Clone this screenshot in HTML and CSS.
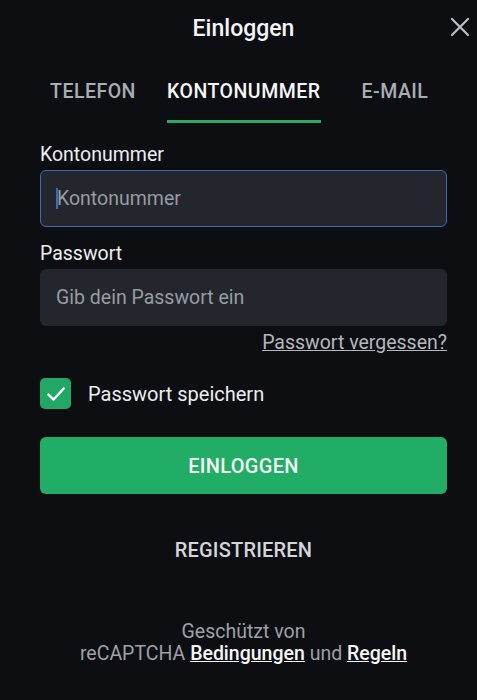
FILE: index.html
```html
<html>
  <head>
    <link rel="stylesheet" href="styles.css">
    <title>Einloggen</title>
  </head>
  <body>
    <div class="sheet">
      <header class="top">
        <h1>Einloggen</h1>
        <button class="close" aria-label="Schließen">
          <svg width="20" height="20" viewBox="0 0 20 20">
            <path d="M2 2 L18 18 M18 2 L2 18" stroke="#bcbfc5" stroke-width="2.2" stroke-linecap="round" fill="none" />
          </svg>
        </button>
      </header>

      <nav class="tabs">
        <span class="tab">TELEFON</span>
        <span class="tab active">KONTONUMMER</span>
        <span class="tab">E-MAIL</span>
      </nav>

      <form class="login">
        <label class="label">Kontonummer</label>
        <div class="field focus"><span class="caret"></span>Kontonummer</div>

        <label class="label">Passwort</label>
        <div class="field">Gib dein Passwort ein</div>

        <a class="forgot" href="#">Passwort vergessen?</a>

        <div class="remember">
          <span class="check">
            <svg width="22" height="22" viewBox="0 0 20 20">
              <path d="M3 10.5 L7.8 15 L17 5" stroke="#fff" stroke-width="2.2" stroke-linecap="round" stroke-linejoin="round" fill="none" />
            </svg>
          </span>
          Passwort speichern
        </div>

        <button class="submit" type="button">EINLOGGEN</button>
      </form>

      <a class="register" href="#">REGISTRIEREN</a>

      <p class="captcha">
        Geschützt von<br>
        reCAPTCHA <a href="#">Bedingungen</a> und <a href="#">Regeln</a>
      </p>
    </div>
  </body>
</html>
```

FILE: styles.css
```css
body {
  margin: 0;
  background: #0d0e11;
  font-family: Roboto, "Noto Sans", sans-serif;
  color: #f2f3f5;
}

.sheet {
  padding: 0 30px 0 40px;
  height: 700px;
  box-sizing: border-box;
}

.top {
  display: flex;
  justify-content: center;
  align-items: center;
  height: 56px;
  position: relative;
}

.top h1 {
  margin: 0;
  font-size: 23px;
  font-weight: 500;
  color: #f4f5f7;
}

.close {
  position: absolute;
  right: -23px;
  top: 17px;
  background: none;
  border: none;
  padding: 0;
}

.tabs {
  display: flex;
  margin: 24px 0 0 10px;
}

.tab {
  flex-shrink: 0;
  white-space: nowrap;
  font-size: 19.5px;
  font-weight: 500;
  letter-spacing: 0.5px;
  color: #a9adb4;
  padding-bottom: 17px;
  margin-right: 31px;
  border-bottom: 3px solid transparent;
}

.tab.active {
  color: #f6f7f9;
  border-bottom-color: #2ea664;
  margin-right: 41px;
}

.login {
  display: flex;
  flex-direction: column;
  margin: 20px 0 0;
  width: 407px;
}

.label {
  font-size: 19.5px;
  color: #eceef0;
  line-height: 24px;
  margin-bottom: 3px;
}

.field {
  height: 57px;
  box-sizing: border-box;
  background: #23262c;
  border-radius: 6px;
  border: 1px solid #23262c;
  display: flex;
  align-items: center;
  padding-left: 15px;
  font-size: 19.5px;
  color: #989ca4;
  margin-bottom: 15px;
}

.field.focus {
  border-color: #3a6db0;
}

.caret {
  width: 2px;
  height: 21px;
  background: #3a6db0;
  margin-right: -1px;
}

.forgot {
  align-self: flex-end;
  margin-top: -10px;
  font-size: 19.5px;
  color: #b4b8be;
  line-height: 24px;
}

.remember {
  display: flex;
  align-items: center;
  margin-top: 23px;
  font-size: 20px;
  color: #eceef0;
}

.check {
  width: 31px;
  height: 31px;
  border-radius: 5px;
  background: #22a865;
  display: flex;
  justify-content: center;
  align-items: center;
  margin-right: 17px;
}

.submit {
  margin-top: 28px;
  height: 57px;
  border: none;
  border-radius: 6px;
  background: #21ad66;
  color: #f4f6f5;
  font-family: inherit;
  font-size: 20px;
  font-weight: 500;
  letter-spacing: 0.3px;
}

.register {
  display: block;
  width: 407px;
  text-align: center;
  margin-top: 44px;
  font-size: 20px;
  font-weight: 500;
  letter-spacing: 0.2px;
  color: #d4d6da;
  text-decoration: none;
}

.captcha {
  width: 407px;
  text-align: center;
  margin: 59px 0 0;
  font-size: 19.5px;
  line-height: 22px;
  color: #9da1a8;
}

.captcha a {
  color: #f6f7f8;
  font-weight: 500;
}
```
